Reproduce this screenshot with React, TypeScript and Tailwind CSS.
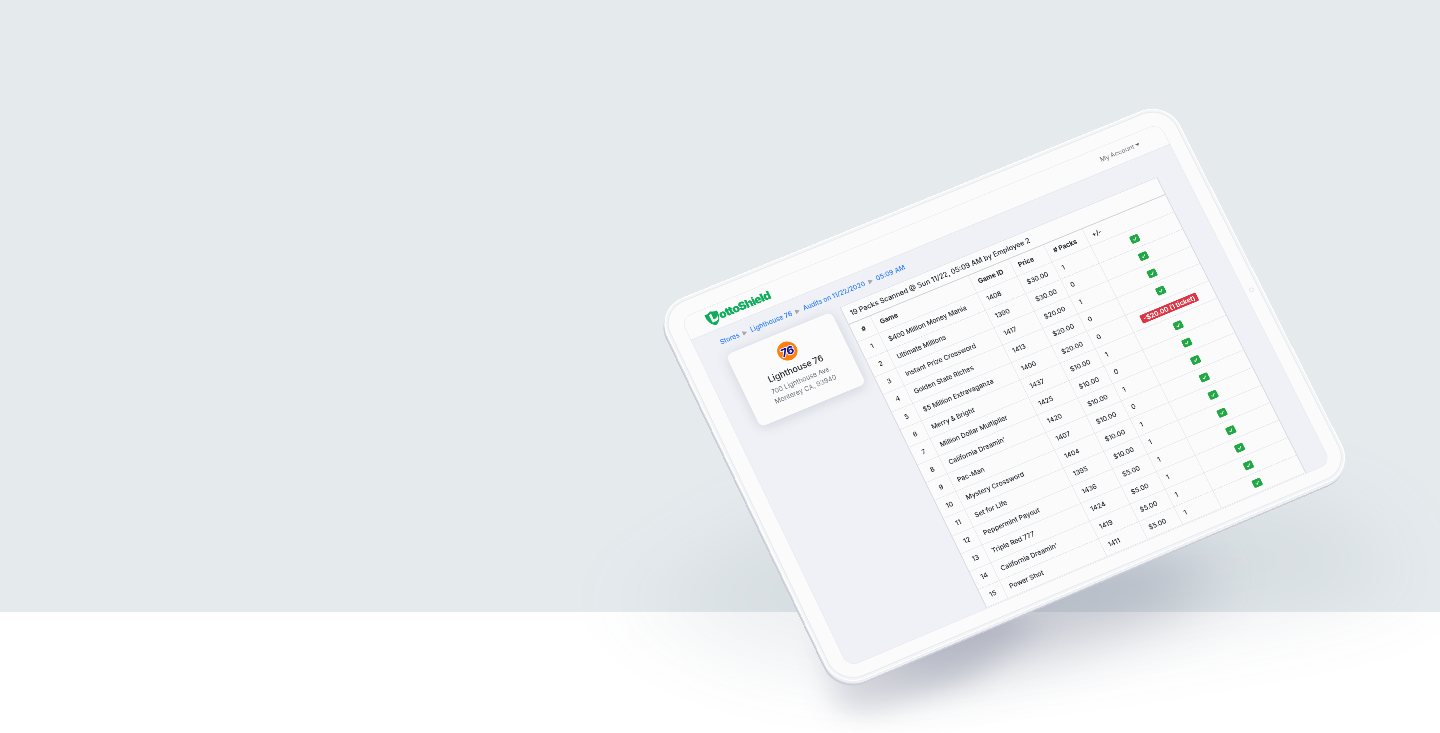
import { Fragment } from "react";

type Point = [number, number];

const BEZEL = 37;
const SCREEN_W = 1024;
const SCREEN_H = 768;

// Corners of the tablet's display on the page: top left, top right, bottom right, bottom left.
const CORNERS: [Point, Point, Point, Point] = [
  [680.3, 318.4],
  [1159.3, 122.9],
  [1331.2, 463],
  [848, 667.5],
];

function perspective([p0, p1, p2, p3]: [Point, Point, Point, Point]) {
  const dx1 = p1[0] - p2[0];
  const dx2 = p3[0] - p2[0];
  const dx3 = p0[0] - p1[0] + p2[0] - p3[0];
  const dy1 = p1[1] - p2[1];
  const dy2 = p3[1] - p2[1];
  const dy3 = p0[1] - p1[1] + p2[1] - p3[1];
  const det = dx1 * dy2 - dx2 * dy1;
  const g = (dx3 * dy2 - dx2 * dy3) / det / SCREEN_W;
  const h = (dx1 * dy3 - dx3 * dy1) / det / SCREEN_H;
  const a = (p1[0] - p0[0]) / SCREEN_W + g * p1[0];
  const b = (p3[0] - p0[0]) / SCREEN_H + h * p3[0];
  const d = (p1[1] - p0[1]) / SCREEN_W + g * p1[1];
  const e = (p3[1] - p0[1]) / SCREEN_H + h * p3[1];
  return `matrix3d(${[a, d, 0, g, b, e, 0, h, 0, 0, 1, 0, p0[0], p0[1], 0, 1].join(",")}) translate(${-BEZEL}px, ${-BEZEL}px)`;
}

const TRANSFORM = perspective(CORNERS);

const GAMES: [string, string, string, string][] = [
  ["$400 Million Money Mania", "1408", "$30.00", "1"],
  ["Ultimate Millions", "1390", "$30.00", "0"],
  ["Instant Prize Crossword", "1417", "$20.00", "1"],
  ["Golden State Riches", "1413", "$20.00", "0"],
  ["$5 Million Extravaganza", "1400", "$20.00", "0"],
  ["Merry & Bright", "1437", "$10.00", "1"],
  ["Million Dollar Multiplier", "1425", "$10.00", "0"],
  ["California Dreamin'", "1420", "$10.00", "1"],
  ["Pac-Man", "1407", "$10.00", "0"],
  ["Mystery Crossword", "1404", "$10.00", "1"],
  ["Set for Life", "1395", "$10.00", "1"],
  ["Peppermint Payout", "1436", "$5.00", "1"],
  ["Triple Red 777", "1424", "$5.00", "1"],
  ["California Dreamin'", "1419", "$5.00", "1"],
  ["Power Shot", "1411", "$5.00", "1"],
];

function Shadows() {
  return (
    <svg className="absolute inset-0" width="1440" height="733" viewBox="0 0 1440 733" aria-hidden="true">
      <defs>
        <filter id="wide" x="-50%" y="-80%" width="200%" height="260%">
          <feGaussianBlur stdDeviation="52 34" />
        </filter>
        <filter id="mid" x="-50%" y="-80%" width="200%" height="260%">
          <feGaussianBlur stdDeviation="36 24" />
        </filter>
        <filter id="tight" x="-50%" y="-80%" width="200%" height="260%">
          <feGaussianBlur stdDeviation="16 12" />
        </filter>
      </defs>
      <path d="M640 600 L780 510 L1340 490 L1400 600 L1120 650 L860 680 L740 660 Z" fill="#66728a" opacity="0.1" filter="url(#wide)" />
      <path d="M860 600 L960 560 L1200 550 L1190 610 L1050 656 L900 695 Z" fill="#62677f" opacity="0.27" filter="url(#mid)" />
      <path d="M824 640 L980 600 L1040 625 L970 680 L875 713 L838 712 Z" fill="#6c6f8a" opacity="0.23" filter="url(#tight)" />
    </svg>
  );
}

function Logo() {
  return (
    <div className="flex items-center">
      <svg width="29" height="32" viewBox="0 0 29 32" aria-hidden="true">
        <path d="M1 4 C6 4.500 10 3 14 0.500 C18 3 22 4.500 27 4 C28 17 24 26 14 31 C4 26 0 17 1 4 Z" fill="#0fac5b" />
        <path d="M9 7 L14 5.500 L14 18.500 C18 19 21 17.500 24 14 C24 20 21 23.500 16 23.500 L9.500 23.500 Z" fill="#fbfbfc" />
      </svg>
      <span className="-ml-0.5 text-[23px] leading-none font-black tracking-[-1.200px] text-[#0fac5b]">ottoShield</span>
    </div>
  );
}

function Separator() {
  return (
    <svg width="9" height="10" viewBox="0 0 9 10" aria-hidden="true">
      <path d="M0 0 L9 5 L0 10 Z" fill="#a5a8ae" />
    </svg>
  );
}

function Breadcrumb() {
  const items = ["Stores", "Lighthouse 76", "Audits on 11/22/2020", "05:09 AM"];
  return (
    <nav className="flex h-[52px] items-center gap-[7.500px] pt-0.5 pl-[49px] text-[12.900px] font-[450] text-[#2f7ffa]">
      {items.map((item, i) => (
        <Fragment key={item}>
          {i > 0 && <Separator />}
          <span className="whitespace-nowrap">{item}</span>
        </Fragment>
      ))}
    </nav>
  );
}

function StoreCard() {
  return (
    <div className="mt-0.5 flex h-[160px] w-[222px] flex-col items-center rounded-[12px] bg-[#fbfbfc] pt-[20px] shadow-[0_4px_24px_rgba(60,65,100,0.17)]">
      <div className="flex size-[39px] items-center justify-center rounded-full bg-[#ff7f0e]">
        <svg width="36" height="32" viewBox="0 0 36 32" aria-hidden="true">
          <text
            x="18"
            y="24"
            textAnchor="middle"
            fontFamily="Inter, sans-serif"
            fontSize="22"
            fontWeight="800"
            letterSpacing="-1"
            fill="#10109a"
            stroke="#ffffff"
            strokeWidth="3.500"
            paintOrder="stroke"
            strokeLinejoin="round"
            transform="skewX(-8) translate(2.200 0)"
          >
            76
          </text>
        </svg>
      </div>
      <div className="mt-2 text-[17px] leading-[24px] font-medium text-[#212529]">Lighthouse 76</div>
      <div className="mt-[3px] text-center text-[13px] leading-[20px] text-[#6c7279]">
        700 Lighthouse Ave.
        <br />
        Monterey CA, 93940
      </div>
    </div>
  );
}

function CheckBadge() {
  return (
    <span className="flex h-[16px] w-[18px] items-center justify-center rounded-[3px] bg-[#22a745]">
      <svg width="10" height="10" viewBox="0 0 10 10" fill="none" stroke="#ffffff" strokeWidth="1.600" aria-hidden="true">
        <path d="M1.500 5.200 L4 7.700 L8.500 2.500" />
      </svg>
    </span>
  );
}

const ROW = "grid h-[39.05px] grid-cols-[45px_209px_86px_75px_83px_1fr] border-b border-[#dfe2e8] divide-x divide-[#dfe2e8]";

function AuditTable() {
  return (
    <div className="h-[720px] w-[681px] border-x-2 border-t border-[#dadde4] bg-[#fbfbfc] text-[13px] font-[450] text-[#23282e]">
      <div className="flex h-[39px] items-center border-b-2 border-[#d3d5d9] pl-3 text-[14px]">
        19 Packs Scanned @ Sun 11/22, 05:09 AM by Employee 2
      </div>
      <div className={`${ROW} font-bold text-[#212529]`}>
        <div className="flex items-center justify-center">#</div>
        <div className="flex items-center pl-3">Game</div>
        <div className="flex items-center pl-3">Game ID</div>
        <div className="flex items-center pl-3">Price</div>
        <div className="flex items-center pl-3">
          # Packs
        </div>
        <div className="flex items-center pl-3">+/-</div>
      </div>
      {GAMES.map(([name, id, price, packs], i) => (
        <div key={id} className={ROW}>
          <div className="flex items-center justify-center">{i + 1}</div>
          <div className="flex items-center pl-3 whitespace-nowrap">{name}</div>
          <div className="flex items-center pl-3">{id}</div>
          <div className="flex items-center pl-3">{price}</div>
          <div className="flex items-center pl-3">{packs}</div>
          <div className="flex items-center justify-center pt-0.5 pr-2.5">
            {i === 4 ? (
              <span className="rounded-[3px] bg-[#dc3545] px-[6px] text-[13px] leading-[18px] font-bold whitespace-nowrap text-white">
                -$20.00 (1 ticket)
              </span>
            ) : (
              <CheckBadge />
            )}
          </div>
        </div>
      ))}
    </div>
  );
}

function Screen() {
  return (
    <div className="h-[768px] w-[1024px] overflow-hidden rounded-[22px] border border-[#e6e8ec] bg-[#eff1f6]">
      <header className="flex h-[48px] items-center justify-between border-b border-[#e0e3e9] bg-[#fbfbfc] pr-[54px] pl-[43px]">
        <Logo />
        <div className="flex items-center gap-1 text-[12.800px] text-[#6c6f74]">
          My Account
          <svg width="8" height="5" viewBox="0 0 8 5" aria-hidden="true">
            <path d="M0 0 H8 L4 5 Z" fill="#5d6065" />
          </svg>
        </div>
      </header>
      <Breadcrumb />
      <main className="flex items-start gap-[19px] pl-[48px]">
        <StoreCard />
        <AuditTable />
      </main>
    </div>
  );
}

export default function App() {
  return (
    <div className="relative h-[733px] w-[1440px] overflow-hidden bg-white font-['Inter',sans-serif]">
      <div className="h-[612px] bg-[#e5ebed]" />
      <Shadows />
      <div className="absolute top-[4px] left-[-1px]">
        <div
          className="h-[839px] w-[1096px] origin-top-left rounded-[58px] border-2 border-[#c9cbd6] bg-[#d3d5de]"
          style={{ transform: TRANSFORM }}
        />
      </div>
      <div className="absolute top-[2px] left-0">
        <div
          className="h-[839px] w-[1096px] origin-top-left rounded-[58px] bg-[#eeeff3]"
          style={{ transform: TRANSFORM }}
        />
      </div>
      <div className="absolute top-0 left-0">
        <div
          className="relative h-[838px] w-[1096px] origin-top-left rounded-[58px] border-2 border-white bg-[#fbfbfc] p-[35px] shadow-[inset_0_0_0_4px_#f4f5f7,inset_0_0_0_6px_#e9ebee]"
          style={{ transform: TRANSFORM }}
        >
          <Screen />
          <span className="absolute top-[416px] right-[14px] size-[10px] rounded-full border-2 border-[#e6e8eb]" />
        </div>
      </div>
    </div>
  );
}
